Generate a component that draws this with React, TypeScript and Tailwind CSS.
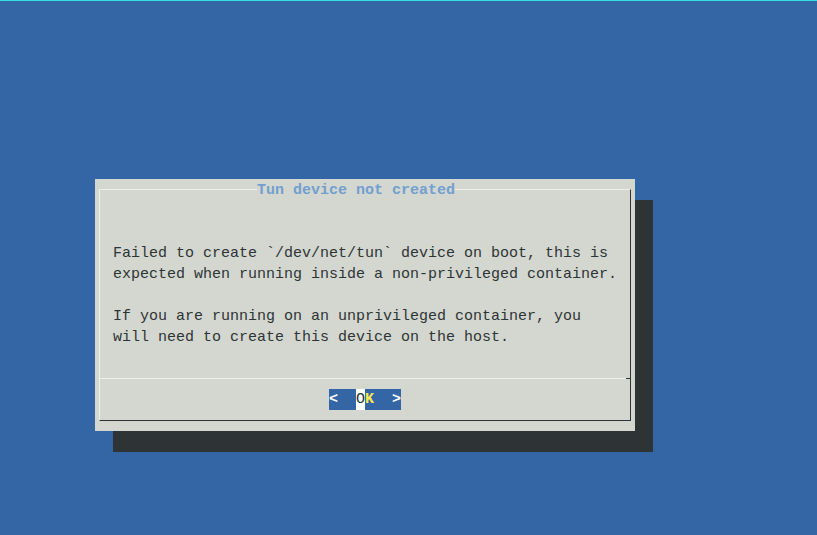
export default function App() {
  return (
    <div className="relative h-[535px] w-[817px] overflow-hidden bg-[#3465a4] font-['Liberation_Mono',monospace] text-[15px] leading-[21px]">
      {/* terminal top edge */}
      <div className="h-px bg-[#34e2e2]" />

      {/* dialog with drop shadow */}
      <div className="ml-[95px] mt-[178px] h-[252px] w-[540px] bg-[#d3d7cf] pl-[4px] pt-[10px] shadow-[18px_21px_0_0_#2e3436]">
        <div className="relative h-[232px] w-[532px] border border-t-[#eeeeec] border-l-[#eeeeec] border-r-[#2e3436] border-b-[#2e3436]">
          {/* title over the top border */}
          <div className="absolute left-[157px] top-[-10px] bg-[#d3d7cf] font-bold text-[#729fcf] whitespace-pre">
            Tun device not created
          </div>

          {/* message */}
          <div className="whitespace-pre pl-[13px] pt-[53px] text-[#2e3436]">
            <div>Failed to create `/dev/net/tun` device on boot, this is</div>
            <div>expected when running inside a non-privileged container.</div>
            <div>&nbsp;</div>
            <div>If you are running on an unprivileged container, you</div>
            <div>will need to create this device on the host.</div>
          </div>

          {/* separator */}
          <div className="relative mt-[30px] h-px bg-[#eeeeec]">
            <div className="absolute right-[-1px] top-0 h-px w-[5px] bg-[#2e3436]" />
          </div>

          {/* button */}
          <div className="ml-[229px] mt-[10px] flex w-[72px] whitespace-pre bg-[#3465a4]">
            <span className="w-[9px] font-bold text-white">&lt;</span>
            <span className="w-[18px]"> </span>
            <span className="w-[9px] bg-white text-[#2e3436]">O</span>
            <span className="w-[9px] font-bold text-[#fce94f]">K</span>
            <span className="w-[18px]"> </span>
            <span className="w-[9px] font-bold text-white">&gt;</span>
          </div>
        </div>
      </div>
    </div>
  );
}
